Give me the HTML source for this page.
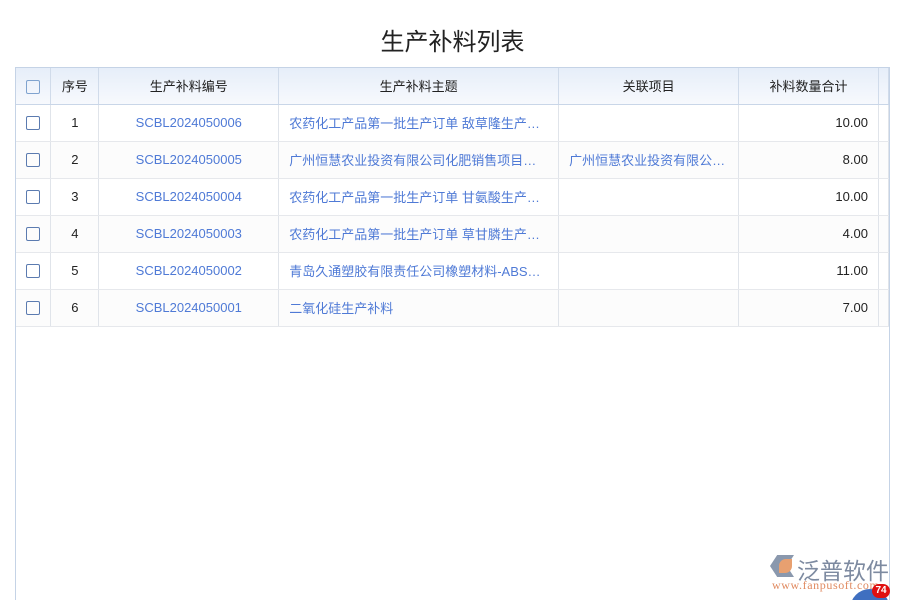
<!DOCTYPE html>
<html><head><meta charset="utf-8"><style>
*{margin:0;padding:0;box-sizing:border-box}
html,body{width:900px;height:600px;overflow:hidden}
body{background:#fff;font-family:"Liberation Sans","Noto Sans CJK SC",sans-serif;position:relative}
h1{position:absolute;top:22px;left:0;width:905px;text-align:center;font-size:24px;font-weight:normal;color:#222}
.t{position:absolute;left:15px;top:67px;width:875px;height:540px;border:1px solid #c5d3e6;border-bottom:none}
table{border-collapse:collapse;table-layout:fixed;font-size:13px}
td,th{height:37px;padding:0;border-right:1px solid #e0e4ea;border-bottom:1px solid #e6e8ec;text-align:center;white-space:nowrap;overflow:hidden;color:#222;font-weight:normal}
th{height:36px;background:linear-gradient(#e6eef9,#f7f9fd);border-right:1px solid #d0dbea;border-bottom:1px solid #c9d6e8}
tr:nth-child(odd) td{background:#fcfcfc}
.cb{display:inline-block;width:14px;height:14px;border:1px solid #5b7bb0;border-radius:2px;vertical-align:middle}
th .cb{border-color:#7fa3cf}
.l{color:#4f7ad6}
.s{text-align:left;padding-left:10px}
.r{text-align:right;padding-right:10px}
.logo{position:absolute;left:770px;top:552px}
</style></head><body>
<h1>生产补料列表</h1>
<div class="t"><table>
<colgroup><col width="35"><col width="48"><col width="180"><col width="280"><col width="180"><col width="140"><col width="10"></colgroup>
<tr><th><span class="cb"></span></th><th>序号</th><th>生产补料编号</th><th>生产补料主题</th><th>关联项目</th><th>补料数量合计</th><th></th></tr>
<tr><td><span class="cb"></span></td><td>1</td><td class="l">SCBL2024050006</td><td class="l s">农药化工产品第一批生产订单 敌草隆生产…</td><td></td><td class="r">10.00</td><td></td></tr>
<tr><td><span class="cb"></span></td><td>2</td><td class="l">SCBL2024050005</td><td class="l s">广州恒慧农业投资有限公司化肥销售项目…</td><td class="l s">广州恒慧农业投资有限公…</td><td class="r">8.00</td><td></td></tr>
<tr><td><span class="cb"></span></td><td>3</td><td class="l">SCBL2024050004</td><td class="l s">农药化工产品第一批生产订单 甘氨酸生产…</td><td></td><td class="r">10.00</td><td></td></tr>
<tr><td><span class="cb"></span></td><td>4</td><td class="l">SCBL2024050003</td><td class="l s">农药化工产品第一批生产订单 草甘膦生产…</td><td></td><td class="r">4.00</td><td></td></tr>
<tr><td><span class="cb"></span></td><td>5</td><td class="l">SCBL2024050002</td><td class="l s">青岛久通塑胶有限责任公司橡塑材料-ABS…</td><td></td><td class="r">11.00</td><td></td></tr>
<tr><td><span class="cb"></span></td><td>6</td><td class="l">SCBL2024050001</td><td class="l s">二氧化硅生产补料</td><td></td><td class="r">7.00</td><td></td></tr>
</table></div>
<div class="logo">
<div style="position:absolute;left:0;top:3px;width:24px;height:22px;background:#8a98ad;clip-path:polygon(30% 0,100% 0,70% 50%,100% 100%,30% 100%,0 50%)"></div>
<div style="position:absolute;left:9px;top:7px;width:13px;height:14px;background:#e8a070;border-radius:7px 0 7px 0"></div>
<div style="position:absolute;left:27px;top:0;font-size:23px;color:#7d8aa0;letter-spacing:0;white-space:nowrap">泛普软件</div>
<div style="position:absolute;left:2px;top:26px;font-size:12px;color:#e08a60;font-family:'Liberation Serif',serif;white-space:nowrap;letter-spacing:0.6px">www.fanpusoft.com</div>
</div>
<div style="position:absolute;left:850px;top:589px;width:40px;height:40px;border-radius:50%;background:#3f6fc0"></div>
<div style="position:absolute;left:872px;top:584px;width:18px;height:14px;border-radius:7px;background:#e01010;color:#fff;font-size:10px;font-weight:bold;text-align:center;line-height:14px">74</div>
</body></html>
